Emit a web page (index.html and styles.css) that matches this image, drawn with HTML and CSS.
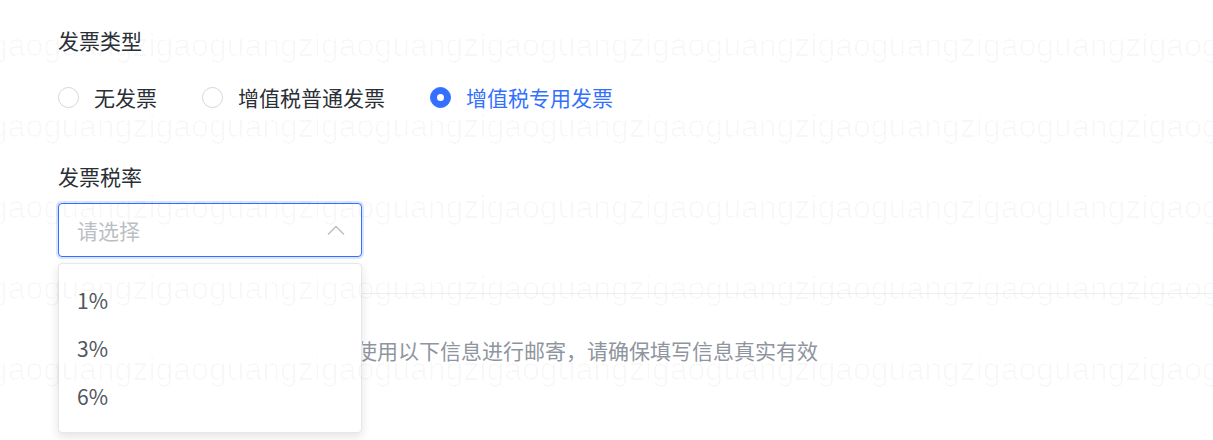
FILE: index.html
```html
<!DOCTYPE html>
<html lang="zh-CN">
<head>
  <meta charset="UTF-8">
  <title>发票信息</title>
  <meta name="viewport" content="width=device-width, initial-scale=1.0">
  <link rel="stylesheet" href="styles.css">
</head>
<body>

  <div class="page">
    <div class="form-item">
      <div class="field-label">发票类型</div>
      <div class="radio-group">
        <label class="radio"><span class="radio-dot"></span>无发票</label>
        <label class="radio"><span class="radio-dot"></span>增值税普通发票</label>
        <label class="radio checked"><span class="radio-dot"></span>增值税专用发票</label>
      </div>
    </div>

    <div class="form-item rate-item">
      <div class="field-label">发票税率</div>
      <div class="select-wrap">
        <div class="select open">
          <span class="placeholder">请选择</span>
          <svg class="arrow" width="18" height="12" viewBox="0 0 18 12">
            <path d="M1 10.5 L9 2.5 L17 10.5" fill="none" stroke="#b8bcc2" stroke-width="1.4"/>
          </svg>
        </div>
        <ul class="dropdown">
          <li>1%</li>
          <li>3%</li>
          <li>6%</li>
        </ul>
      </div>
    </div>

    <div class="divider"></div>

    <div class="tip">
      <svg class="tip-icon" width="21" height="21" viewBox="0 0 21 21">
        <circle cx="10.5" cy="10.5" r="9.5" fill="none" stroke="#8f959e" stroke-width="1.4"/>
        <path d="M10.5 9v6M10.5 6v1.4" stroke="#8f959e" stroke-width="1.6"/>
      </svg>
      <span>专用发票开具后，我们将会使用以下信息进行邮寄，请确保填写信息真实有效</span>
    </div>
  </div>

  <!-- account watermark laid over the whole form -->
  <div class="watermark">
    <div class="wm-row">gaoguangzigaoguangzigaoguangzigaoguangzigaoguangzigaoguangzigaoguangzigaoguangzi</div>
    <div class="wm-row">gaoguangzigaoguangzigaoguangzigaoguangzigaoguangzigaoguangzigaoguangzigaoguangzi</div>
    <div class="wm-row">gaoguangzigaoguangzigaoguangzigaoguangzigaoguangzigaoguangzigaoguangzigaoguangzi</div>
    <div class="wm-row">gaoguangzigaoguangzigaoguangzigaoguangzigaoguangzigaoguangzigaoguangzigaoguangzi</div>
    <div class="wm-row">gaoguangzigaoguangzigaoguangzigaoguangzigaoguangzigaoguangzigaoguangzigaoguangzi</div>
  </div>

</body>
</html>
```

FILE: styles.css
```css
html,
body {
  height: 100%;
}

body {
  font-family: "Noto Sans CJK SC", "Noto Sans", sans-serif;
  margin: 0;
  padding: 0;
  background: #fff;
  color: #1f2329;
  position: relative;
}

.page {
  padding: 25px 0 0 58px;
}

.field-label {
  font-size: 21px;
  line-height: 30px;
  color: #2b2f36;
}

.radio-group {
  display: flex;
  gap: 45px;
  margin-top: 27px;
}

.radio {
  display: flex;
  align-items: center;
  gap: 15px;
  font-size: 21px;
  line-height: 30px;
  color: #2b2f36;
  cursor: pointer;
}

.radio-dot {
  width: 21px;
  height: 21px;
  box-sizing: border-box;
  border: 1px solid #d3d6da;
  border-radius: 50%;
  background: #fff;
  position: relative;
}

.radio.checked {
  color: #3370ff;
}

.radio.checked .radio-dot {
  border-color: #3370ff;
  background: #3370ff;
}

.radio.checked .radio-dot::after {
  content: "";
  position: absolute;
  left: 50%;
  top: 50%;
  width: 7px;
  height: 7px;
  margin: -3.5px 0 0 -3.5px;
  border-radius: 50%;
  background: #fff;
}

.rate-item {
  margin-top: 49px;
}

.select-wrap {
  position: relative;
  width: 304px;
  margin-top: 12px;
}

.select {
  height: 54px;
  box-sizing: border-box;
  border: 1px solid #dee0e3;
  border-radius: 4px;
  padding: 0 16px 0 18px;
  display: flex;
  align-items: center;
  justify-content: space-between;
  background: #fff;
}

.select.open {
  border-color: #3370ff;
  box-shadow: 0 0 0 2px rgba(51, 112, 255, 0.18);
}

.placeholder {
  font-size: 21px;
  color: #bbbfc4;
}

.dropdown {
  position: absolute;
  top: 60px;
  left: 0;
  width: 304px;
  box-sizing: border-box;
  margin: 0;
  padding: 12px 0;
  list-style: none;
  background: #fff;
  border: 1px solid #e6e7e9;
  border-radius: 4px;
  box-shadow: 0 4px 10px rgba(31, 35, 41, 0.12);
  z-index: 5;
}

.dropdown li {
  height: 48px;
  line-height: 48px;
  padding: 0 18px;
  font-size: 21px;
  color: #51565d;
}

.divider {
  height: 1px;
  background: #eeeff0;
  margin-top: 36px;
}

.tip {
  display: flex;
  align-items: center;
  gap: 25px;
  margin-top: 41px;
  font-size: 21px;
  line-height: 30px;
  color: #8f959e;
}

.tip-icon {
  flex: none;
}

.watermark {
  position: absolute;
  top: 0;
  left: 0;
  right: 0;
  height: 440px;
  overflow: hidden;
  pointer-events: none;
  z-index: 10;
  padding-top: 5px;
  box-sizing: border-box;
}

.wm-row {
  font-family: "Liberation Sans", Arial, sans-serif;
  font-size: 32px;
  line-height: 81px;
  white-space: nowrap;
  margin-left: -10px;
  color: rgba(0, 0, 0, 0.028);
}
```
